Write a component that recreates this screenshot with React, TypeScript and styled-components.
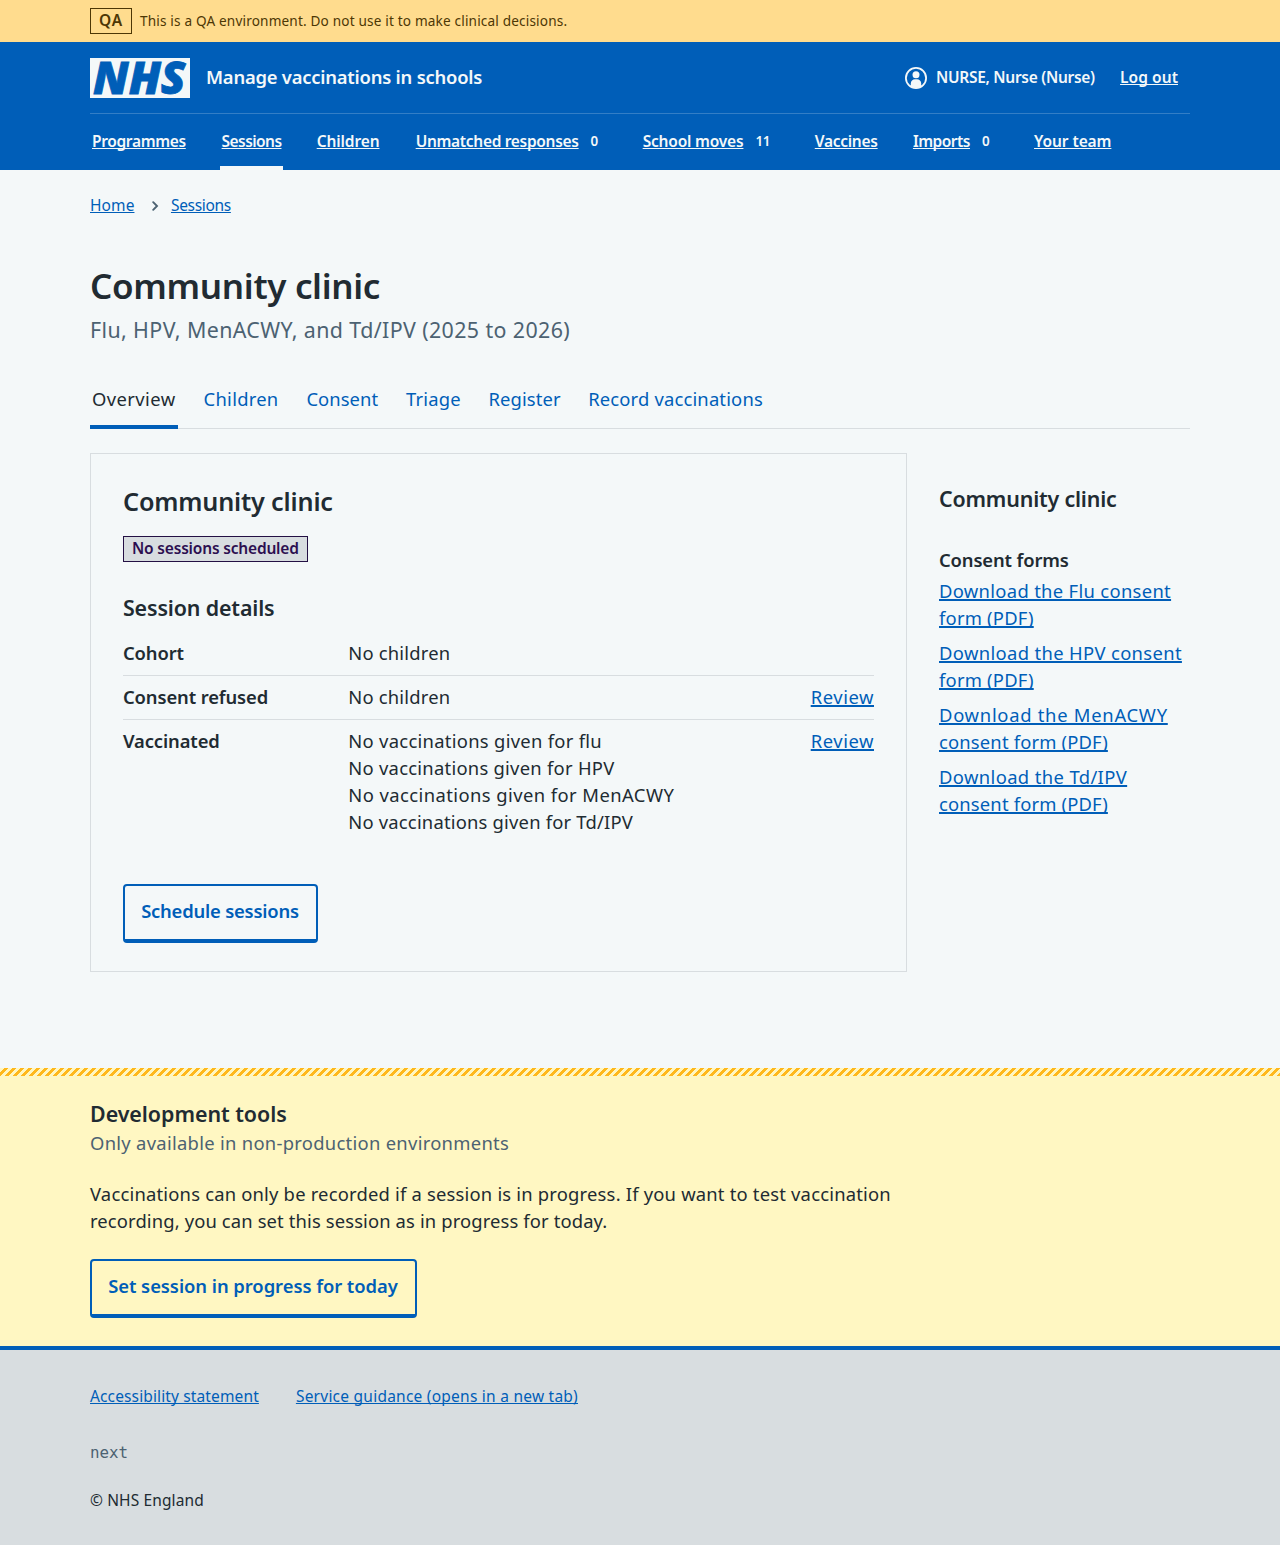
import React from 'react';
import styled, { createGlobalStyle } from 'styled-components';

const blue = '#005eb8';
const page = '#f4f8f9';
const ink = '#212b32';
const grey = '#d8dde0';
const muted = '#4c6272';

const GlobalStyle = createGlobalStyle`
  *, *::before, *::after { box-sizing: border-box; }
  body {
    margin: 0;
    background: ${grey};
    color: ${ink};
    font-family: "Noto Sans", "Liberation Sans", sans-serif;
    font-size: 18.4px;
    line-height: 27px;
    text-size-adjust: none;
  }
  h1, h2, h3, h4, p, ul, dl, dd, dt { margin: 0; padding: 0; }
  ul { list-style: none; }
`;

type Spacing = { $ls?: number };

const Container = styled.div`
  width: 1100px;
  margin: 0 auto;
`;

const Page = styled.div`
  background: ${page};
`;

const Link = styled.a<Spacing>`
  color: ${blue};
  letter-spacing: ${p => p.$ls ?? 0}px;
  text-decoration: underline;
  text-decoration-thickness: 1px;
  text-underline-offset: 1px;
  text-decoration-skip-ink: none;
`;

const BodyLink = styled(Link)`
  text-decoration-thickness: 1.5px;
`;

/* Environment banner */
const Banner = styled.div`
  background: #ffdc8e;
  color: #4d3705;
  height: 42px;
`;

const BannerRow = styled(Container)`
  display: flex;
  gap: 8px;
  height: 42px;
  padding-top: 8px;
  font-size: 13.6px;
  line-height: 25px;
  letter-spacing: 0.17px;
`;

const EnvTag = styled.strong`
  width: 42px;
  height: 26px;
  border: 1px solid currentColor;
  font-size: 15.5px;
  font-weight: 600;
  line-height: 23px;
  letter-spacing: 0.8px;
  text-align: center;
`;

/* Header */
const Header = styled.header`
  background: ${blue};
  color: ${page};
  height: 128px;
`;

const HeaderTop = styled(Container)`
  display: flex;
  align-items: center;
  height: 72px;
  border-bottom: 1px solid #337ec6;
`;

const LogoImage = styled.svg`
  display: block;
  overflow: visible;
`;

const ServiceName = styled.span`
  margin-left: 16px;
  padding-bottom: 2px;
  font-weight: 600;
  letter-spacing: -0.22px;
`;

const Account = styled.div`
  display: flex;
  align-items: center;
  margin-left: auto;
  padding-right: 12px;
  font-size: 15.5px;
  font-weight: 600;
  line-height: 24px;
`;

const UserIcon = styled.svg`
  display: block;
  width: 24px;
  height: 24px;
  margin-right: 8px;
`;

const UserName = styled.span`
  width: 184px;
  padding-bottom: 2px;
  letter-spacing: -0.3px;
`;

const HeaderLink = styled(Link)`
  color: inherit;
`;

const LogOut = styled(HeaderLink)`
  padding-bottom: 2px;
`;

const Nav = styled(Container)`
  display: flex;
  gap: 31.6px;
  height: 56px;
  font-size: 15.5px;
  font-weight: 600;
  line-height: 24px;
`;

const NavItem = styled.div<{ $current?: boolean; $width: number }>`
  display: flex;
  flex: none;
  width: ${p => p.$width}px;
  padding: 15px 2px 13px;
  white-space: nowrap;
  border-bottom: 4px solid ${p => (p.$current ? page : 'transparent')};
`;

const Count = styled.span<Spacing>`
  padding-left: 12px;
  font-size: 13.4px;
  letter-spacing: ${p => p.$ls ?? 0}px;
`;

/* Page head */
const Breadcrumb = styled.nav`
  display: flex;
  align-items: center;
  padding-top: 23px;
  font-size: 15.5px;
  line-height: 24px;
`;

const Chevron = styled.svg`
  width: 8px;
  height: 10px;
  margin: 1px 12.3px 0 16.2px;
`;

const Title = styled.h1`
  margin-top: 46px;
  font-size: 35px;
  font-weight: 600;
  line-height: 46px;
  letter-spacing: -0.33px;
`;

const Caption = styled.p`
  margin-top: 6px;
  color: ${muted};
  font-size: 21.4px;
  line-height: 30px;
  letter-spacing: 0.39px;
`;

const Tabs = styled.nav`
  display: flex;
  gap: 24.1px;
  height: 60px;
  margin-top: 24px;
  border-bottom: 1px solid ${grey};
`;

const Tab = styled.a<{ $current?: boolean; $width: number } & Spacing>`
  width: ${p => p.$width}px;
  height: 60px;
  padding: 16px 2px 0;
  white-space: nowrap;
  color: ${p => (p.$current ? ink : blue)};
  letter-spacing: ${p => p.$ls ?? 0}px;
  border-bottom: 4px solid ${p => (p.$current ? blue : 'transparent')};
`;

/* Main columns */
const Columns = styled.main`
  display: grid;
  grid-template-columns: 817px 251px;
  gap: 32px;
  align-items: start;
  padding: 24px 0 96px;
`;

const Card = styled.section`
  height: 519px;
  padding: 31px 32px 0;
  border: 1px solid ${grey};
`;

const CardTitle = styled.h2`
  font-size: 25.2px;
  font-weight: 600;
  line-height: 32px;
  letter-spacing: -0.17px;
`;

const StatusTag = styled.strong`
  display: block;
  width: 185px;
  height: 26px;
  margin-top: 19px;
  padding-left: 8px;
  border: 1px solid #231044;
  background: ${grey};
  color: #2c0f50;
  font-size: 15.5px;
  font-weight: 600;
  line-height: 23px;
  letter-spacing: -0.18px;
`;

const SubHeading = styled.h3<Spacing>`
  font-size: 21.4px;
  font-weight: 600;
  line-height: 30px;
  letter-spacing: ${p => p.$ls ?? -0.14}px;
`;

const DetailsHeading = styled(SubHeading)`
  margin-top: 31px;
`;

const Summary = styled.dl`
  margin-top: 9px;
`;

const SummaryRow = styled.div`
  display: grid;
  grid-template-columns: 225.3px 1fr auto;
  padding: 7px 0 9px;
  &:not(:last-child) { border-bottom: 1px solid ${grey}; }
`;

const Term = styled.dt`
  font-weight: 600;
  letter-spacing: -0.12px;
`;

const Value = styled.dd<Spacing>`
  letter-spacing: ${p => p.$ls ?? 0.2}px;
`;

const Button = styled.button<{ $width: number } & Spacing>`
  display: block;
  width: ${p => p.$width}px;
  height: 59px;
  padding: 0 1px 5px 0;
  border: 2px solid ${blue};
  border-bottom-width: 4px;
  border-radius: 4px;
  background: transparent;
  color: ${blue};
  font: inherit;
  font-weight: 600;
  letter-spacing: ${p => p.$ls ?? 0}px;
  white-space: nowrap;
`;

const CardAction = styled.div`
  padding-top: 40px;
`;

const Aside = styled.aside`
  padding-top: 31px;
`;

const AsideHeading = styled.h4`
  margin: 32px 0 4px;
  font-size: 18.4px;
  font-weight: 600;
  line-height: 27px;
  letter-spacing: -0.13px;
`;

const Downloads = styled.ul`
  display: grid;
  gap: 8px;
`;

const Line = styled.span<Spacing>`
  display: block;
  width: fit-content;
  letter-spacing: ${p => p.$ls ?? 0}px;
  white-space: nowrap;
`;

/* Development tools */
const DevTools = styled.section`
  height: 278px;
  padding-top: 31px;
  background:
    linear-gradient(135deg, transparent 25%, #ffb81c 25% 50%, transparent 50% 75%, #ffb81c 75%) 0 0 / 8px 8px repeat-x,
    #fff7c2;
`;

const DevNote = styled.p`
  color: ${muted};
  letter-spacing: 0.29px;
`;

const DevText = styled.p`
  margin: 24px 0 25px;
`;

/* Footer */
const Footer = styled.footer`
  height: 199px;
  padding-top: 34px;
  border-top: 4px solid ${blue};
  background: ${grey};
  font-size: 15.5px;
  line-height: 24px;
`;

const FooterLinks = styled.div`
  display: flex;
  gap: 37px;
`;

const Version = styled.p`
  margin-top: 33px;
  color: ${muted};
  font-family: "DejaVu Sans Mono", monospace;
  font-size: 15.8px;
`;

const Copyright = styled.p`
  margin-top: 23px;
  letter-spacing: 0.12px;
`;

const Logo = () => (
  <LogoImage width="100" height="40" viewBox="0 0 100 40" role="img" aria-label="NHS">
    <rect width="100" height="40" fill={page} />
    <text
      x="3"
      y="36"
      fill={blue}
      stroke={blue}
      strokeWidth="0.8"
      fontFamily="Open Sans, sans-serif"
      fontWeight="800"
      fontStyle="italic"
      fontSize="44.8"
      textLength="92.6"
      lengthAdjust="spacingAndGlyphs"
    >
      NHS
    </text>
  </LogoImage>
);

type NavEntry = { label: string; width: number; ls: number; count?: string; countLs?: number; current?: boolean };

const navItems: NavEntry[] = [
  { label: 'Programmes', width: 98, ls: -0.34 },
  { label: 'Sessions', width: 63.5, ls: -0.56, current: true },
  { label: 'Children', width: 67.4, ls: -0.1 },
  { label: 'Unmatched responses', width: 195.4, ls: -0.31, count: '0' },
  { label: 'School moves', width: 140.5, ls: -0.19, count: '11', countLs: -0.4 },
  { label: 'Vaccines', width: 66.6, ls: -0.28 },
  { label: 'Imports', width: 89.5, ls: -0.5, count: '0' },
  { label: 'Your team', width: 82, ls: -0.08 },
];

const tabs = [
  { label: 'Overview', width: 87.5, ls: 0.42, current: true },
  { label: 'Children', width: 78.7, ls: 0.27 },
  { label: 'Consent', width: 75.5, ls: 0.08 },
  { label: 'Triage', width: 58.5, ls: 0.21 },
  { label: 'Register', width: 75.5, ls: 0.1 },
  { label: 'Record vaccinations', width: 179, ls: 0.17 },
];

const downloads = [
  [{ text: 'Download the Flu consent', ls: 0.32 }, { text: 'form (PDF)', ls: 0.22 }],
  [{ text: 'Download the HPV consent', ls: 0.35 }, { text: 'form (PDF)', ls: 0.22 }],
  [{ text: 'Download the MenACWY', ls: 0.72 }, { text: 'consent form (PDF)', ls: 0.17 }],
  [{ text: 'Download the Td/IPV', ls: 0.38 }, { text: 'consent form (PDF)', ls: 0.17 }],
];

const vaccinated = [
  { text: 'No vaccinations given for flu', ls: 0.29 },
  { text: 'No vaccinations given for HPV', ls: 0.26 },
  { text: 'No vaccinations given for MenACWY', ls: 0.43 },
  { text: 'No vaccinations given for Td/IPV', ls: 0.2 },
];

export default function App() {
  return (
    <Page>
      <GlobalStyle />
      <Banner>
        <BannerRow>
          <EnvTag>QA</EnvTag>
          <span>This is a QA environment. Do not use it to make clinical decisions.</span>
        </BannerRow>
      </Banner>

      <Header>
        <HeaderTop>
          <Logo />
          <ServiceName>Manage vaccinations in schools</ServiceName>
          <Account>
            <UserIcon viewBox="0 0 24 24">
              <circle cx="12" cy="12" r="10.1" fill="none" stroke={page} strokeWidth="1.8" />
              <circle cx="12" cy="8.8" r="3.5" fill={page} />
              <path d="M6.8 20.4V17.5a4.2 4.2 0 0 1 4.2-4.2h2a4.2 4.2 0 0 1 4.2 4.2v2.9a10 10 0 0 1-10.4 0z" fill={page} />
            </UserIcon>
            <UserName>NURSE, Nurse (Nurse)</UserName>
            <LogOut $ls={0.06}>Log out</LogOut>
          </Account>
        </HeaderTop>
        <Nav>
          {navItems.map(n => (
            <NavItem key={n.label} $current={n.current} $width={n.width}>
              <HeaderLink $ls={n.ls}>{n.label}</HeaderLink>
              {n.count && <Count $ls={n.countLs}>{n.count}</Count>}
            </NavItem>
          ))}
        </Nav>
      </Header>

      <Container>
        <Breadcrumb>
          <Link $ls={0.09}>Home</Link>
          <Chevron viewBox="0 0 8 10">
            <path d="M2.2 1.2 6 5 2.2 8.8" fill="none" stroke={muted} strokeWidth="1.9" strokeLinecap="round" />
          </Chevron>
          <Link $ls={-0.32}>Sessions</Link>
        </Breadcrumb>
        <Title>Community clinic</Title>
        <Caption>Flu, HPV, MenACWY, and Td/IPV (2025 to 2026)</Caption>
        <Tabs>
          {tabs.map(t => (
            <Tab key={t.label} $current={t.current} $width={t.width} $ls={t.ls}>{t.label}</Tab>
          ))}
        </Tabs>

        <Columns>
          <Card>
            <CardTitle>Community clinic</CardTitle>
            <StatusTag>No sessions scheduled</StatusTag>
            <DetailsHeading>Session details</DetailsHeading>
            <Summary>
              <SummaryRow>
                <Term>Cohort</Term>
                <Value>No children</Value>
              </SummaryRow>
              <SummaryRow>
                <Term>Consent refused</Term>
                <Value>No children</Value>
                <dd><BodyLink $ls={0.55}>Review</BodyLink></dd>
              </SummaryRow>
              <SummaryRow>
                <Term>Vaccinated</Term>
                <div>
                  {vaccinated.map(v => <Value key={v.text} $ls={v.ls}>{v.text}</Value>)}
                </div>
                <dd><BodyLink $ls={0.55}>Review</BodyLink></dd>
              </SummaryRow>
            </Summary>
            <CardAction>
              <Button $width={195} $ls={-0.2}>Schedule sessions</Button>
            </CardAction>
          </Card>

          <Aside>
            <SubHeading $ls={-0.18}>Community clinic</SubHeading>
            <AsideHeading>Consent forms</AsideHeading>
            <Downloads>
              {downloads.map(lines => (
                <li key={lines[0].text}>
                  <BodyLink>
                    {lines.map(l => <Line key={l.text} $ls={l.ls}>{l.text}</Line>)}
                  </BodyLink>
                </li>
              ))}
            </Downloads>
          </Aside>
        </Columns>
      </Container>

      <DevTools>
        <Container>
          <SubHeading $ls={-0.03}>Development tools</SubHeading>
          <DevNote>Only available in non-production environments</DevNote>
          <DevText>
            <Line $ls={0.2}>Vaccinations can only be recorded if a session is in progress. If you want to test vaccination</Line>
            <Line $ls={0.13}>recording, you can set this session as in progress for today.</Line>
          </DevText>
          <Button $width={327} $ls={-0.05}>Set session in progress for today</Button>
        </Container>
      </DevTools>

      <Footer>
        <Container>
          <FooterLinks>
            <Link $ls={0.13}>Accessibility statement</Link>
            <Link $ls={0.24}>Service guidance (opens in a new tab)</Link>
          </FooterLinks>
          <Version>next</Version>
          <Copyright>© NHS England</Copyright>
        </Container>
      </Footer>
    </Page>
  );
}
